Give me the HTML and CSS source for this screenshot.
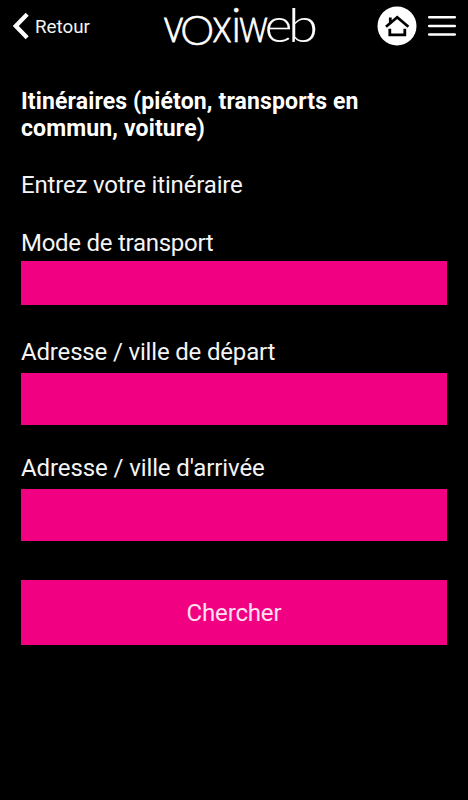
FILE: index.html
```html
<!DOCTYPE html>
<html lang="fr">
<head>
<meta charset="utf-8">
<title>voxiweb</title>
<link rel="stylesheet" href="styles.css">
</head>
<body>
<header class="topbar">
  <a class="back">
    <svg class="chevron" width="16" height="28" viewBox="0 0 16 28"><path d="M14.2 2.3 2.8 14l11.4 11.7" fill="none" stroke="#fff" stroke-width="4.2"/></svg>
    <span class="back-label">Retour</span>
  </a>
  <svg class="logo" width="156" height="52" viewBox="0 0 156 52">
    <g class="wordmark">
      <text class="narrow" x="0.5" y="42" textLength="20" lengthAdjust="spacingAndGlyphs">v</text>
      <text class="wordmark-o" x="16.9" y="45.3" textLength="34.4" lengthAdjust="spacingAndGlyphs">O</text>
      <text class="narrow" x="49.5" y="42" textLength="19" lengthAdjust="spacingAndGlyphs">x</text>
      <text x="68" y="42">i</text>
      <text class="narrow" x="76" y="42" textLength="29" lengthAdjust="spacingAndGlyphs">w</text>
      <text class="wide" x="101.5" y="42" textLength="28" lengthAdjust="spacingAndGlyphs">e</text>
      <text class="wide" x="125" y="42" textLength="30" lengthAdjust="spacingAndGlyphs">b</text>
    </g>
  </svg>
  <nav class="actions">
    <svg class="home" width="40" height="40" viewBox="0 0 40 40">
      <circle cx="20" cy="20" r="19.5" fill="#fff"/>
      <path d="M9 20.8 20.2 11.3 31.4 20.8M13.3 18v-6.5M12.8 22.8v6h15v-6" fill="none" stroke="#000" stroke-width="2.8"/>
    </svg>
    <svg class="menu" width="28" height="20" viewBox="0 0 28 20"><path d="M1.2 1.3h25.6M1.2 10h25.6M1.2 18.5h25.6" stroke="#fff" stroke-width="2.5" stroke-linecap="round"/></svg>
  </nav>
</header>
<main class="content">
  <h1 class="title">Itinéraires (piéton, transports en commun, voiture)</h1>
  <p class="intro">Entrez votre itinéraire</p>
  <form class="form">
    <label class="label label-mode" for="mode">Mode de transport</label>
    <input class="field field-mode" id="mode">
    <label class="label" for="from">Adresse / ville de départ</label>
    <input class="field field-from" id="from">
    <label class="label label-to" for="to">Adresse / ville d'arrivée</label>
    <input class="field field-to" id="to">
    <button class="submit" type="button">Chercher</button>
  </form>
</main>
</body>
</html>
```
FILE: styles.css
```css
* { box-sizing: border-box; }
body {
  margin: 0;
  min-height: 800px;
  background: #000;
  color: #f4f4f4;
  font-family: Roboto, "Liberation Sans", sans-serif;
  font-size: 24px;
  letter-spacing: -0.17px;
}
.topbar {
  display: flex;
  align-items: center;
  justify-content: space-between;
  height: 52px;
  padding: 0 12px 0 13px;
}
.back { display: flex; align-items: center; gap: 6px; width: 150px; }
.back-label { font-size: 18.8px; line-height: 24px; margin-top: 2px; letter-spacing: 0; }
.logo { flex: none; display: block; overflow: visible; }
.wordmark {
  font-family: Lato, sans-serif;
  font-weight: 300;
  font-size: 47px;
  letter-spacing: 0;
  fill: #fff;
  stroke: #fff;
  stroke-width: 0.4px;
}
.narrow { stroke-width: 0.8px; }
.wide { stroke-width: 0.1px; font-size: 48px; }
.wordmark-o { font-size: 42px; }
.actions { display: flex; align-items: center; justify-content: flex-end; gap: 11px; flex: 1; }
.content { padding: 35px 21px 0; }
.title { margin: 0; font-size: 23px; line-height: 27px; font-weight: 700; letter-spacing: 0.13px; color: #fff; padding-top: 1px; }
.intro { margin: 29px 0 30px; line-height: 28px; }
.form { display: flex; flex-direction: column; }
.label { line-height: 28px; }
.label-mode { letter-spacing: -0.27px; }
.label-to { letter-spacing: -0.1px; }
.field { display: block; width: 426px; border: 0; padding: 0; background: #f10081; }
.field-mode { height: 44px; margin: 4px 0 33px; }
.field-from { height: 52px; margin: 7px 0 29px; }
.field-to { height: 52px; margin: 7px 0 39px; }
.submit {
  width: 426px;
  height: 65px;
  border: 0;
  padding: 1px 0 0;
  background: #f10081;
  color: #ffe0f0;
  font: inherit;
  letter-spacing: inherit;
}
```
